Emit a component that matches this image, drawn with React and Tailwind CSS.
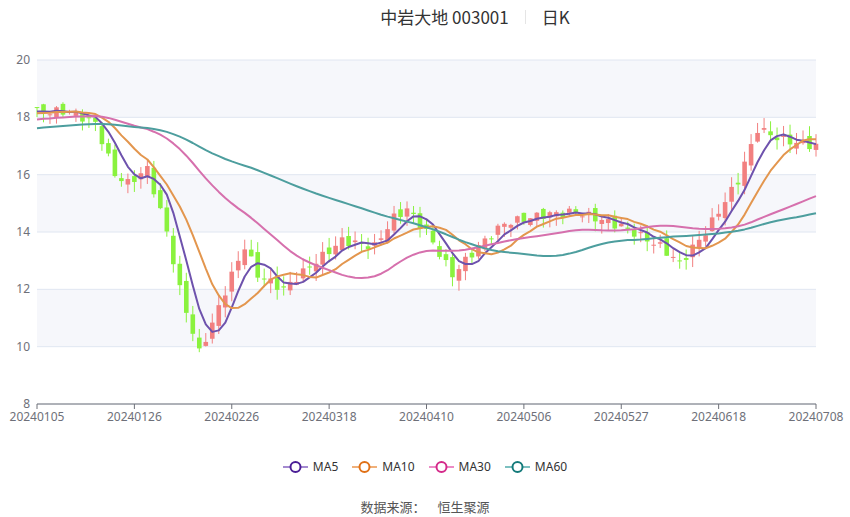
import React from "react";

const keys = [[0,18.2],[5,18.2],[9,17.8],[12,16.0],[14,15.7],[17,16.2],[20,14.0],[22,12.0],[24,10.5],[25,9.8],[27,10.8],[30,12.5],[32,13.5],[34,12.5],[38,12.0],[42,12.8],[47,13.7],[52,13.5],[55,14.5],[57,14.8],[60,14.0],[64,12.5],[68,13.5],[72,14.3],[78,14.6],[83,14.7],[90,14.2],[96,13.5],[99,12.9],[103,14.0],[108,15.8],[111,17.6],[115,17.2],[120,17.0]];
const N = 121;
function interp(i){for(let k=0;k<keys.length-1;k++){const [a,va]=keys[k],[b,vb]=keys[k+1];if(i>=a&&i<=b)return va+(vb-va)*(i-a)/(b-a||1);}return 17;}
const closes=[];const candles=[];
let prev=18.3;
for(let i=0;i<N;i++){
  const base=interp(i);
  const n1=Math.sin(i*2.3+1)*0.25, n2=Math.sin(i*1.7+0.4)*0.3;
  const c=base+n1*0.6;
  const o=prev+n2*0.5;
  const hi=Math.max(o,c)+Math.abs(Math.sin(i*3.1))*0.35;
  const lo=Math.min(o,c)-Math.abs(Math.sin(i*2.7+2))*0.35;
  candles.push({o,c,hi,lo});closes.push(c);prev=c;
}
const pre=[];for(let i=0;i<60;i++)pre.push(17.0+1.2*i/59);
const all=[...pre,...closes];
function ma(n){return closes.map((_,i)=>{const j=i+60;let s=0;for(let k=j-n+1;k<=j;k++)s+=all[k];return s/n;});}
const X0=37,X1=816,Y20=60,Y8=404;
const xi=i=>X0+i*(X1-X0)/(N-1);
const yp=p=>Y20+(20-p)*(Y8-Y20)/12;
const line=arr=>arr.map((v,i)=>`${xi(i).toFixed(1)},${yp(v).toFixed(1)}`).join(" ");
const ticks=["20240105","20240126","20240226","20240318","20240410","20240506","20240527","20240618","20240708"];
const mas=[[5,"#6e52ad"],[10,"#e3964e"],[30,"#d670ad"],[60,"#4d9e9e"]];
const legend=[["MA5","#a48ad0","#4a1e96"],["MA10","#f0b07a","#e07016"],["MA30","#ec8cc6","#d42a8a"],["MA60","#7cc0c0","#147a7a"]];

export default function App(){
  return (
    <div className="w-[850px] h-[517px] bg-white relative" style={{fontFamily:'"Noto Sans CJK SC","Noto Sans",sans-serif'}}>
      <div className="flex justify-center pt-[4px] pl-[100px] text-[17px] text-[#333] h-[30px] items-center gap-4">
        <span>中岩大地 003001</span><span className="w-px h-[14px] bg-[#e5e5e5]"></span><span>日K</span>
      </div>
      <svg width="850" height="440" viewBox="0 30 850 440" className="block">
        {[0,2,4].map(k=><rect key={k} x={X0} y={Y20+k*57.33} width={X1-X0} height={57.33} fill="#f6f7fb"/>)}
        {[20,18,16,14,12,10,8].map(v=>(<g key={v}>
          <line x1={X0} x2={X1} y1={yp(v)} y2={yp(v)} stroke="#e0e6f1" strokeWidth="1"/>
          <text x={X0-7} y={yp(v)+4} textAnchor="end" fontSize="12" fill="#6e7079" fontFamily="Noto Sans, sans-serif">{v}</text>
        </g>))}
        <line x1={X0} x2={X1} y1={Y8} y2={Y8} stroke="#6e7079"/>
        {ticks.map((t,k)=>{const x=X0+k*(X1-X0)/8;return(<g key={t}>
          <line x1={x} x2={x} y1={Y8} y2={Y8+5} stroke="#6e7079"/>
          <text x={x} y={Y8+17} textAnchor="middle" fontSize="12" fill="#6e7079" fontFamily="Noto Sans, sans-serif">{t}</text></g>);})}
        {candles.map((c,i)=>{const up=c.c>=c.o;const col=up?"#f28080":"#8af23e";const x=xi(i);
          return(<g key={i}>
            <line x1={x} x2={x} y1={yp(c.hi)} y2={yp(c.lo)} stroke={col} strokeWidth="1"/>
            <rect x={x-2.3} y={yp(Math.max(c.o,c.c))} width="4.6" height={Math.max(1,Math.abs(yp(c.o)-yp(c.c)))} fill={col}/>
          </g>);})}
        {mas.map(([n,col])=><polyline key={n} points={line(ma(n))} fill="none" stroke={col} strokeWidth="2" strokeLinejoin="round"/>)}
      </svg>
      <div className="absolute left-0 right-0 top-[458px] flex justify-center gap-[14px] text-[12px] text-[#333]" style={{fontFamily:'"Noto Sans",sans-serif'}}>
        {legend.map(([n,l,d])=>(
          <div key={n} className="flex items-center gap-[5px]">
            <svg width="25" height="14"><line x1="0" x2="25" y1="7" y2="7" stroke={l} strokeWidth="2"/><circle cx="12.5" cy="7" r="5" fill="white" stroke={d} strokeWidth="2"/></svg>
            <span>{n}</span>
          </div>))}
      </div>
      <div className="absolute left-0 right-0 top-[497px] flex justify-center gap-3 text-[13px] text-[#555]">
        <span>数据来源：</span><span>恒生聚源</span>
      </div>
    </div>
  );
}
